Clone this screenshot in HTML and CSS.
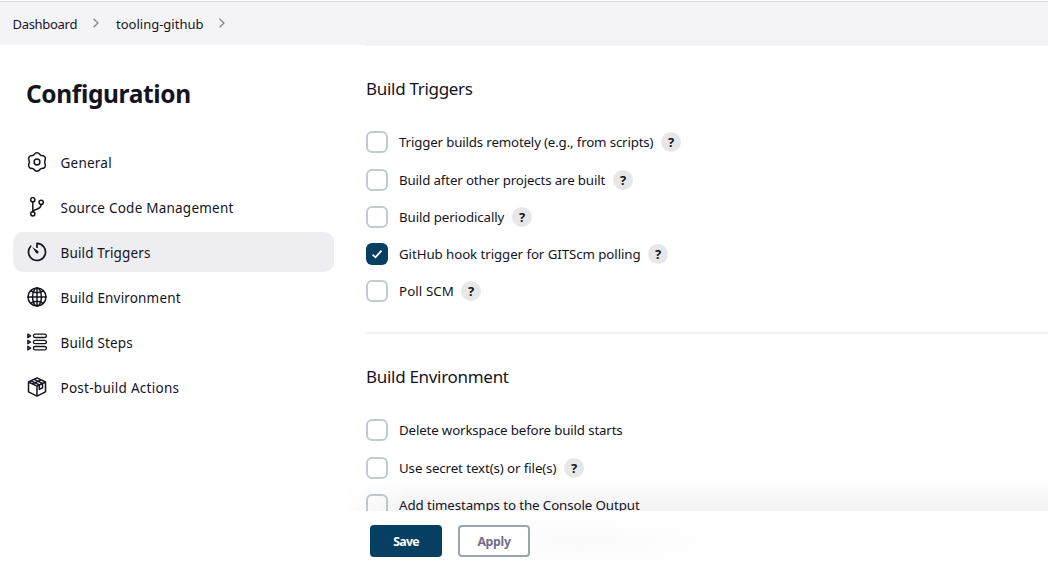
FILE: index.html
```html
<!DOCTYPE html>
<html lang="en">
<head>
<meta charset="utf-8">
<title>tooling-github Config</title>
<link rel="stylesheet" href="styles.css">
</head>
<body>
<nav class="breadcrumbs">
  <span class="crumb crumb-home">Dashboard</span>
  <svg class="chevron" viewBox="0 0 8 10"><path d="M1.5 .8 6 5 1.5 9.2"/></svg>
  <span class="crumb crumb-job">tooling-github</span>
  <svg class="chevron" viewBox="0 0 8 10"><path d="M1.5 .8 6 5 1.5 9.2"/></svg>
</nav>
<div class="page">
  <aside class="sidebar">
    <h1 class="title">Configuration</h1>
    <ul class="tasks">
      <li class="task"><svg class="icon" viewBox="0 0 20 20"><path d="M6.1 3.3C7.2 3.3 7.200 .8 10 .8S12.800 3.300 13.900 3.300C14.500 3.700 16.600 2.700 18 5.200S17.200 9 17.700 10C17.200 11 19.400 12.300 18 14.800S14.500 16.300 13.900 16.700C12.800 16.700 12.800 19.200 10 19.200S7.200 16.700 6.100 16.700C5.500 16.300 3.400 17.300 2 14.800S2.800 11 2.300 10C2.800 9 .6 7.700 2 5.200S5.500 3.700 6.100 3.300Z"/><circle cx="10" cy="10" r="2.9"/></svg><span class="name">General</span></li>
      <li class="task"><svg class="icon" viewBox="0 0 20 20"><circle cx="5.8" cy="2.7" r="2.1"/><circle cx="5.8" cy="16.800" r="2.1"/><circle cx="14.2" cy="5.3" r="2.1"/><path d="M5.8 4.800v9.900M14.100 7.400c-.2 3.200-2 4.200-4.500 4.800-2 .5-3.300 1.100-3.800 2.600"/></svg><span class="name">Source Code Management</span></li>
      <li class="task active"><svg class="icon" viewBox="0 0 20 20"><path class="thick" d="M10 5.200V1.400a8.500 8.500 0 1 1-6.300 2.800"/><path class="fill" d="M5.200 5.100 11.100 8.900A1.400 1.400 0 1 1 9.100 10.900Z"/></svg><span class="name triggers">Build Triggers</span></li>
      <li class="task"><svg class="icon" viewBox="0 0 20 20"><circle cx="10" cy="10" r="9"/><ellipse cx="10" cy="10" rx="4.4" ry="9"/><path d="M10 1v18M1 10h18M3.800 3.900q6.200 3.800 12.400 0M3.800 16.100q6.200-3.800 12.400 0"/></svg><span class="name environment-name">Build Environment</span></li>
      <li class="task"><svg class="icon steps" viewBox="0 0 20 20"><path d="M.8 2.100v3.600l2.800-1.800ZM.8 8.200v3.600l2.800-1.800ZM.8 14.300v3.600l2.800-1.800Z"/><rect x="6.4" y="2.1" width="13" height="3.4" rx="1.7"/><rect x="6.4" y="8.3" width="13" height="3.4" rx="1.7"/><rect x="6.4" y="14.5" width="13" height="3.4" rx="1.7"/></svg><span class="name environment-name">Build Steps</span></li>
      <li class="task"><svg class="icon" viewBox="0 0 20 20"><path d="M10 .9 18.500 5v9.800L10 19.100 1.500 14.800V5ZM1.500 5 10 9.200 18.500 5M10 9.200v9.900M4 3.800l8.300 4.100v4.500l3.200-1.500V6.500L7.200 2.400M5.500 6.900l8.400-4.100"/></svg><span class="name post">Post-build Actions</span></li>
    </ul>
  </aside>
  <main class="main">
    <section class="section">
      <h2 class="heading">Build Triggers</h2>
      <div class="option"><span class="box"></span><span class="label l1">Trigger builds remotely (e.g., from scripts)</span><span class="help">?</span></div>
      <div class="option"><span class="box"></span><span class="label l2">Build after other projects are built</span><span class="help">?</span></div>
      <div class="option"><span class="box"></span><span class="label l3">Build periodically</span><span class="help">?</span></div>
      <div class="option"><span class="box checked"><svg class="check" viewBox="0 0 22 22"><path d="M6.600 11.600 9.500 14.300 15.500 7.700"/></svg></span><span class="label l4">GitHub hook trigger for GITScm polling</span><span class="help">?</span></div>
      <div class="option"><span class="box"></span><span class="label l5">Poll SCM</span><span class="help">?</span></div>
    </section>
    <section class="section environment">
      <h2 class="heading">Build Environment</h2>
      <div class="option"><span class="box"></span><span class="label l6">Delete workspace before build starts</span></div>
      <div class="option"><span class="box"></span><span class="label l7">Use secret text(s) or file(s)</span><span class="help">?</span></div>
      <div class="option"><span class="box"></span><span class="label l8">Add timestamps to the Console Output</span></div>
    </section>
  </main>
</div>
<footer class="actions"><button class="button save">Save</button><button class="button apply">Apply</button></footer>
</body>
</html>
```
FILE: styles.css
```css
* { box-sizing: border-box; }
body { margin: 0; height: 570px; overflow: hidden; position: relative; background: #fff; color: #14141f; font: 13.5px/20px "Noto Sans", "Open Sans", sans-serif; }
.breadcrumbs { border-top: 1px solid #d9dadd; margin-top: 1px; height: 44px; background: #f4f4f6; display: flex; align-items: center; padding: 1px 0 0 12.5px; }
.crumb { white-space: nowrap; font-size: 13px; }
.crumb-home { width: 64.5px; letter-spacing: -.3px; }
.crumb-job { width: 87px; }
.chevron { width: 8px; height: 10px; margin: -2px 16px 0 15px; fill: none; stroke: #85858c; stroke-width: 1.3; }
.page { display: flex; }
.sidebar { width: 366px; padding: 32px 32px 0 13px; }
.title { margin: 0 0 31px 13px; font-size: 24.5px; line-height: 34px; font-weight: 700; letter-spacing: -.37px; white-space: nowrap; }
.tasks { list-style: none; margin: 0; padding: 0; display: grid; gap: 5px; }
.task { height: 40px; display: flex; align-items: center; gap: 13.5px; padding-left: 14px; border-radius: 10px; white-space: nowrap; }
.active { background: #eeedf2; }
.name { padding-top: 2px; letter-spacing: .23px; }
.triggers { letter-spacing: .14px; }
.environment-name { letter-spacing: .17px; }
.post { letter-spacing: .27px; }
.icon { width: 20px; height: 20px; fill: none; stroke: #14141f; stroke-width: 1.5; stroke-linejoin: round; stroke-linecap: round; }
.thick { stroke-width: 1.7; }
.fill { fill: #14141f; stroke: none; }
.steps { stroke-width: 1.3; }
.main { flex: 1; border-top: 1px solid #f4f4f6; }
.section { padding-top: 30px; }
.environment { margin-top: 29.8px; border-top: 2px solid #f2f2f5; }
.heading { margin: 0 0 29.4px; font-size: 17px; line-height: 26px; font-weight: 400; letter-spacing: -.3px; white-space: nowrap; }
.option { display: flex; align-items: center; height: 22px; margin-bottom: 15.2px; }
.box { width: 22px; height: 22px; border: 2px solid #c1cbd1; border-radius: 6px; margin-right: 11px; flex: none; }
.checked { background: #073f63; border: 0; }
.check { display: block; width: 22px; height: 22px; fill: none; stroke: #fff; stroke-width: 1.8; }
.label { white-space: nowrap; font-size: 13.3px; }
.help { width: 20px; height: 20px; margin-left: 8px; border-radius: 50%; background: #e7e7e7; font-size: 13px; line-height: 20px; text-align: center; font-weight: 700; }
.l1 { width: 254px; letter-spacing: -.16px; }
.l2 { width: 206px; letter-spacing: -.14px; }
.l3 { width: 105px; letter-spacing: -.1px; }
.l4 { width: 241px; letter-spacing: -.08px; }
.l5 { width: 54px; letter-spacing: .1px; }
.l6 { letter-spacing: -.15px; }
.l7 { width: 157px; letter-spacing: -.1px; }
.l8 { letter-spacing: -.09px; }
.actions { position: absolute; left: 340px; right: 0; bottom: 0; height: 59px; background: radial-gradient(ellipse 180px 30px at 240px 31px, #fbfbfb, #fff); padding: 14px 0 0 30px; display: flex; gap: 16px; align-items: flex-start; }
.actions::before { content: ""; position: absolute; left: 0; right: 0; top: -32px; height: 32px; background: linear-gradient(transparent, rgba(0,0,0,.055)); mask-image: linear-gradient(to right, transparent, #000 70px); }
.button { width: 72px; height: 32px; border-radius: 4px; font: 700 12.3px/20px "Noto Sans", sans-serif; letter-spacing: -.3px; padding: 1px 0 0; }
.save { background: #073f63; color: #fff; border: 0; letter-spacing: -.7px; }
.apply { background: #fff; color: #726d8c; border: 2px solid #9aa6af; }
```
